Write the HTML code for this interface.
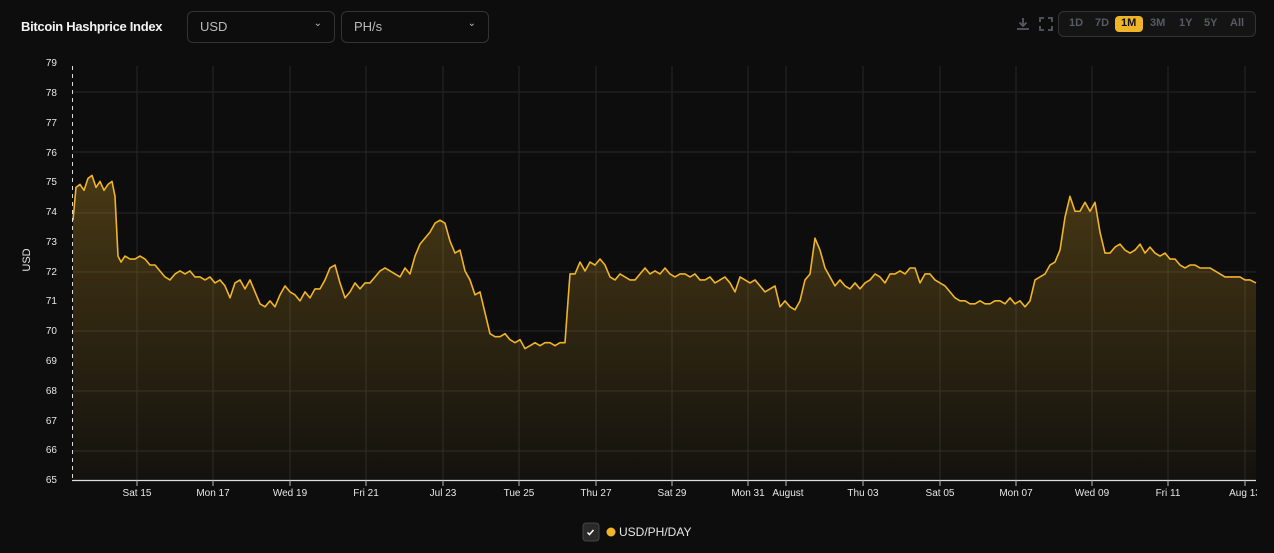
<!DOCTYPE html>
<html><head><meta charset="utf-8"><style>
html,body{margin:0;padding:0;background:#0d0d0d;width:1274px;height:553px;overflow:hidden;font-family:"Liberation Sans",sans-serif}
.t{position:absolute;left:21px;top:19px;color:#f2f2f2;font-weight:bold;font-size:13px;letter-spacing:-0.3px}
.sel{position:absolute;top:11px;height:32px;border:1px solid #333;border-radius:6px;box-sizing:border-box;color:#bbb;font-size:13px;padding:7px 12px}
.sel span{position:absolute;right:12px;top:6px;font-size:10px}
.rng{position:absolute;left:1058px;top:11px;width:198px;height:26px;border:1px solid #333;border-radius:6px;background:#141414;box-sizing:border-box}
.rng b{position:absolute;top:5px;font-size:11px;color:#565b62;font-weight:bold}
</style></head><body>
<div class="t">Bitcoin Hashprice Index</div>
<div class="sel" style="left:187px;width:148px">USD<span>&#8964;</span></div>
<div class="sel" style="left:341px;width:148px">PH/s<span>&#8964;</span></div>
<svg style="position:absolute;left:1015px;top:16px" width="16" height="16" viewBox="0 0 16 16"><path d="M8 2v8M4.5 6.5L8 10l3.5-3.5M2 13h12" stroke="#555a60" stroke-width="1.8" fill="none"/></svg>
<svg style="position:absolute;left:1039px;top:17px" width="14" height="14" viewBox="0 0 14 14"><path d="M1 5V1h4M9 1h4v4M13 9v4H9M5 13H1V9" stroke="#555a60" stroke-width="1.8" fill="none"/></svg>
<div class="rng">
<b style="left:10px">1D</b><b style="left:36px">7D</b>
<div style="position:absolute;left:56px;top:4px;width:28px;height:16px;background:#f0b429;border-radius:4px"></div>
<b style="left:62px;color:#111">1M</b><b style="left:91px">3M</b><b style="left:120px">1Y</b><b style="left:145px">5Y</b><b style="left:171px">All</b>
</div>
<svg style="position:absolute;left:0;top:0" width="1274" height="553">
<defs><linearGradient id="g" x1="0" y1="1" x2="0" y2="0"><stop offset="0" stop-color="#f0b429" stop-opacity="0.26"/><stop offset="1" stop-color="#f0b429" stop-opacity="0.03"/></linearGradient></defs>
<g stroke="#262626" stroke-width="1">
<line x1="73" x2="1256" y1="92" y2="92"/><line x1="73" x2="1256" y1="152" y2="152"/><line x1="73" x2="1256" y1="213" y2="213"/><line x1="73" x2="1256" y1="272" y2="272"/><line x1="73" x2="1256" y1="331" y2="331"/><line x1="73" x2="1256" y1="391" y2="391"/><line x1="73" x2="1256" y1="451" y2="451"/>
<line y1="66" y2="480" x1="137" x2="137"/><line y1="66" y2="480" x1="213" x2="213"/><line y1="66" y2="480" x1="290" x2="290"/><line y1="66" y2="480" x1="366" x2="366"/><line y1="66" y2="480" x1="443" x2="443"/><line y1="66" y2="480" x1="519" x2="519"/><line y1="66" y2="480" x1="596" x2="596"/><line y1="66" y2="480" x1="672" x2="672"/><line y1="66" y2="480" x1="748" x2="748"/><line y1="66" y2="480" x1="786" x2="786"/><line y1="66" y2="480" x1="863" x2="863"/><line y1="66" y2="480" x1="940" x2="940"/><line y1="66" y2="480" x1="1016" x2="1016"/><line y1="66" y2="480" x1="1092" x2="1092"/><line y1="66" y2="480" x1="1168" x2="1168"/><line y1="66" y2="480" x1="1245" x2="1245"/>
</g>
<g transform="translate(0,480) scale(1,-29.86) translate(0,-65)">
<polygon fill="url(#g)" points="73,65 73,73.7 76,74.8 80,74.9 84,74.7 88,75.1 92,75.2 96,74.8 100,75 104,74.7 108,74.9 112,75 115,74.5 118,72.5 121,72.3 125,72.5 130,72.4 135,72.4 140,72.5 145,72.4 150,72.2 155,72.2 160,72 165,71.8 170,71.7 175,71.9 180,72 185,71.9 190,72 195,71.8 200,71.8 205,71.7 210,71.8 215,71.6 220,71.7 225,71.5 230,71.1 235,71.6 240,71.7 245,71.4 250,71.7 255,71.3 260,70.9 265,70.8 270,71 275,70.8 280,71.2 285,71.5 290,71.3 295,71.2 300,71 305,71.3 310,71.1 315,71.4 320,71.4 325,71.7 330,72.1 335,72.2 340,71.6 345,71.1 350,71.3 355,71.6 360,71.4 365,71.6 370,71.6 375,71.8 380,72 385,72.1 390,72 395,71.9 400,71.8 405,72.1 410,71.9 415,72.5 420,72.9 425,73.1 430,73.3 435,73.6 440,73.7 445,73.6 450,73 455,72.6 460,72.7 465,72 470,71.7 475,71.2 480,71.3 485,70.6 490,69.9 495,69.8 500,69.8 505,69.9 510,69.7 515,69.6 520,69.7 525,69.4 530,69.5 535,69.6 540,69.5 545,69.6 550,69.6 555,69.5 560,69.6 565,69.6 568,71 570,71.9 575,71.9 580,72.3 585,72 590,72.3 595,72.2 600,72.4 605,72.2 610,71.8 615,71.7 620,71.9 625,71.8 630,71.7 635,71.7 640,71.9 645,72.1 650,71.9 655,72 660,71.9 665,72.1 670,71.9 675,71.8 680,71.9 685,71.9 690,71.8 695,71.9 700,71.7 705,71.7 710,71.8 715,71.6 720,71.7 725,71.8 730,71.6 735,71.3 740,71.8 745,71.7 750,71.6 755,71.7 760,71.5 765,71.3 770,71.4 775,71.5 780,70.8 785,71 790,70.8 795,70.7 800,71 805,71.7 810,71.9 815,73.1 820,72.7 825,72.1 830,71.8 835,71.5 840,71.7 845,71.5 850,71.4 855,71.6 860,71.4 865,71.6 870,71.7 875,71.9 880,71.8 885,71.6 890,71.9 895,71.9 900,72 905,71.9 910,72.1 915,72.1 920,71.6 925,71.9 930,71.9 935,71.7 940,71.6 945,71.5 950,71.3 955,71.1 960,71 965,71 970,70.9 975,70.9 980,71 985,70.9 990,70.9 995,71 1000,71 1005,70.9 1010,71.1 1015,70.9 1020,71 1025,70.8 1030,71 1035,71.7 1040,71.8 1045,71.9 1050,72.2 1055,72.3 1060,72.7 1065,73.8 1070,74.5 1075,74 1080,74 1085,74.3 1090,74 1095,74.3 1100,73.3 1105,72.6 1110,72.6 1115,72.8 1120,72.9 1125,72.7 1130,72.6 1135,72.7 1140,72.9 1145,72.6 1150,72.8 1155,72.6 1160,72.5 1165,72.6 1170,72.4 1175,72.4 1180,72.2 1185,72.1 1190,72.2 1195,72.2 1200,72.1 1205,72.1 1210,72.1 1215,72 1220,71.9 1225,71.8 1230,71.8 1235,71.8 1240,71.8 1245,71.7 1250,71.7 1256,71.6 1256,65"/>
<polyline fill="none" stroke="#f0b429" stroke-width="1.6" vector-effect="non-scaling-stroke" stroke-linejoin="round" points="73,73.7 76,74.8 80,74.9 84,74.7 88,75.1 92,75.2 96,74.8 100,75 104,74.7 108,74.9 112,75 115,74.5 118,72.5 121,72.3 125,72.5 130,72.4 135,72.4 140,72.5 145,72.4 150,72.2 155,72.2 160,72 165,71.8 170,71.7 175,71.9 180,72 185,71.9 190,72 195,71.8 200,71.8 205,71.7 210,71.8 215,71.6 220,71.7 225,71.5 230,71.1 235,71.6 240,71.7 245,71.4 250,71.7 255,71.3 260,70.9 265,70.8 270,71 275,70.8 280,71.2 285,71.5 290,71.3 295,71.2 300,71 305,71.3 310,71.1 315,71.4 320,71.4 325,71.7 330,72.1 335,72.2 340,71.6 345,71.1 350,71.3 355,71.6 360,71.4 365,71.6 370,71.6 375,71.8 380,72 385,72.1 390,72 395,71.9 400,71.8 405,72.1 410,71.9 415,72.5 420,72.9 425,73.1 430,73.3 435,73.6 440,73.7 445,73.6 450,73 455,72.6 460,72.7 465,72 470,71.7 475,71.2 480,71.3 485,70.6 490,69.9 495,69.8 500,69.8 505,69.9 510,69.7 515,69.6 520,69.7 525,69.4 530,69.5 535,69.6 540,69.5 545,69.6 550,69.6 555,69.5 560,69.6 565,69.6 568,71 570,71.9 575,71.9 580,72.3 585,72 590,72.3 595,72.2 600,72.4 605,72.2 610,71.8 615,71.7 620,71.9 625,71.8 630,71.7 635,71.7 640,71.9 645,72.1 650,71.9 655,72 660,71.9 665,72.1 670,71.9 675,71.8 680,71.9 685,71.9 690,71.8 695,71.9 700,71.7 705,71.7 710,71.8 715,71.6 720,71.7 725,71.8 730,71.6 735,71.3 740,71.8 745,71.7 750,71.6 755,71.7 760,71.5 765,71.3 770,71.4 775,71.5 780,70.8 785,71 790,70.8 795,70.7 800,71 805,71.7 810,71.9 815,73.1 820,72.7 825,72.1 830,71.8 835,71.5 840,71.7 845,71.5 850,71.4 855,71.6 860,71.4 865,71.6 870,71.7 875,71.9 880,71.8 885,71.6 890,71.9 895,71.9 900,72 905,71.9 910,72.1 915,72.1 920,71.6 925,71.9 930,71.9 935,71.7 940,71.6 945,71.5 950,71.3 955,71.1 960,71 965,71 970,70.9 975,70.9 980,71 985,70.9 990,70.9 995,71 1000,71 1005,70.9 1010,71.1 1015,70.9 1020,71 1025,70.8 1030,71 1035,71.7 1040,71.8 1045,71.9 1050,72.2 1055,72.3 1060,72.7 1065,73.8 1070,74.5 1075,74 1080,74 1085,74.3 1090,74 1095,74.3 1100,73.3 1105,72.6 1110,72.6 1115,72.8 1120,72.9 1125,72.7 1130,72.6 1135,72.7 1140,72.9 1145,72.6 1150,72.8 1155,72.6 1160,72.5 1165,72.6 1170,72.4 1175,72.4 1180,72.2 1185,72.1 1190,72.2 1195,72.2 1200,72.1 1205,72.1 1210,72.1 1215,72 1220,71.9 1225,71.8 1230,71.8 1235,71.8 1240,71.8 1245,71.7 1250,71.7 1256,71.6"/>
</g>
<line x1="72.5" y1="66" x2="72.5" y2="480" stroke="#ddd" stroke-dasharray="4,4"/>
<line x1="72" y1="480.5" x2="1256" y2="480.5" stroke="#ddd" stroke-width="1.2"/>
<g stroke="#bbb"><line x1="137" x2="137" y1="480" y2="486"/><line x1="213" x2="213" y1="480" y2="486"/><line x1="290" x2="290" y1="480" y2="486"/><line x1="366" x2="366" y1="480" y2="486"/><line x1="443" x2="443" y1="480" y2="486"/><line x1="519" x2="519" y1="480" y2="486"/><line x1="596" x2="596" y1="480" y2="486"/><line x1="672" x2="672" y1="480" y2="486"/><line x1="748" x2="748" y1="480" y2="486"/><line x1="786" x2="786" y1="480" y2="486"/><line x1="863" x2="863" y1="480" y2="486"/><line x1="940" x2="940" y1="480" y2="486"/><line x1="1016" x2="1016" y1="480" y2="486"/><line x1="1092" x2="1092" y1="480" y2="486"/><line x1="1168" x2="1168" y1="480" y2="486"/><line x1="1245" x2="1245" y1="480" y2="486"/></g>
<g fill="#e6e6e6" font-size="10" text-anchor="end" font-family="Liberation Sans,sans-serif">
<text x="57" y="66">79</text><text x="57" y="96">78</text><text x="57" y="126">77</text><text x="57" y="156">76</text><text x="57" y="185">75</text><text x="57" y="215">74</text><text x="57" y="245">73</text><text x="57" y="275">72</text><text x="57" y="304">71</text><text x="57" y="334">70</text><text x="57" y="364">69</text><text x="57" y="394">68</text><text x="57" y="424">67</text><text x="57" y="453">66</text><text x="57" y="483">65</text>
</g>
<text x="30" y="260" fill="#e6e6e6" font-size="11" transform="rotate(-90 30 260)" text-anchor="middle" font-family="Liberation Sans,sans-serif">USD</text>
<g fill="#e6e6e6" font-size="10" text-anchor="middle" font-family="Liberation Sans,sans-serif">
<text x="137" y="496">Sat 15</text><text x="213" y="496">Mon 17</text><text x="290" y="496">Wed 19</text><text x="366" y="496">Fri 21</text><text x="443" y="496">Jul 23</text><text x="519" y="496">Tue 25</text><text x="596" y="496">Thu 27</text><text x="672" y="496">Sat 29</text><text x="748" y="496">Mon 31</text><text x="788" y="496">August</text><text x="863" y="496">Thu 03</text><text x="940" y="496">Sat 05</text><text x="1016" y="496">Mon 07</text><text x="1092" y="496">Wed 09</text><text x="1168" y="496">Fri 11</text><text x="1245" y="496">Aug 13</text>
</g>
<rect x="1257" y="482" width="17" height="30" fill="#0d0d0d"/>
<rect x="583" y="523" width="16" height="18" rx="3" fill="#2a2a2a" stroke="#444"/>
<path d="M587.5 532.5l2 2 4-4.5" stroke="#fff" stroke-width="1.5" fill="none"/>
<circle cx="611" cy="532" r="4.5" fill="#f0b429"/>
<text x="619" y="536" fill="#e6e6e6" font-size="12" font-family="Liberation Sans,sans-serif">USD/PH/DAY</text>
</svg>
</body></html>
